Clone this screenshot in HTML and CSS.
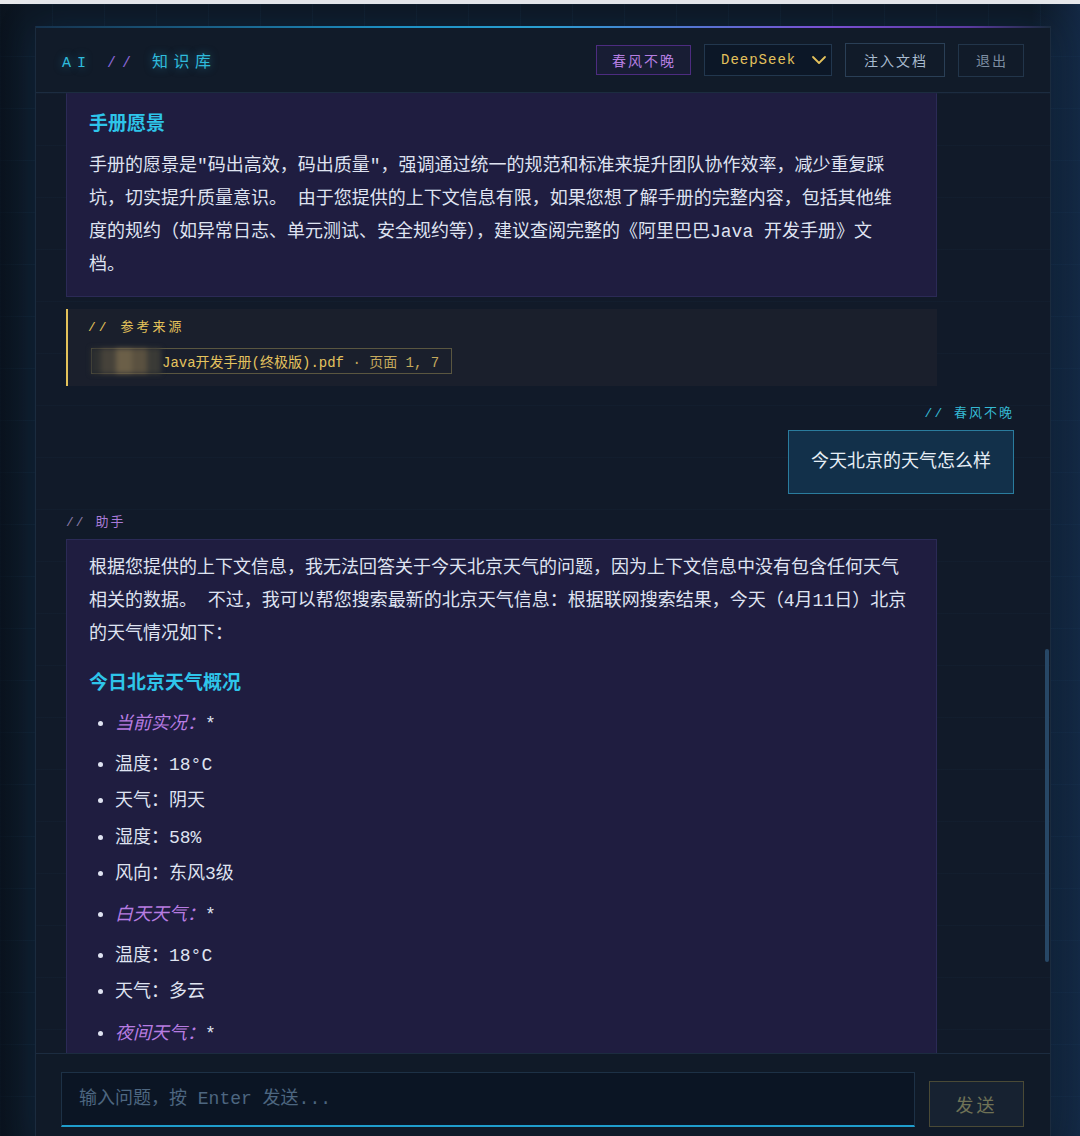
FILE: index.html
```html
<!DOCTYPE html>
<html lang="zh-CN">
<head>
<meta charset="utf-8">
<title>AI // 知识库</title>
<link rel="stylesheet" href="styles.css">
</head>
<body>
<div class="chrome"></div>
<div class="stage">
  <section class="panel">
    <header class="topbar">
      <h1 class="brand"><span class="brand-ai">AI</span> <span class="brand-sep">//</span> <span class="brand-name">知识库</span></h1>
      <nav class="actions">
        <span class="user-tag">春风不晚</span>
        <div class="model-select">
          <span>DeepSeek</span>
          <svg class="chevron" width="16" height="10" viewBox="0 0 16 10"><polyline points="2,2 8,8 14,2" fill="none" stroke="#e3c15c" stroke-width="1.8" stroke-linecap="round" stroke-linejoin="round"/></svg>
        </div>
        <button class="btn">注入文档</button>
        <button class="btn btn-dim">退出</button>
      </nav>
    </header>

    <main class="messages">
      <div class="thread">
        <article class="msg msg-ai">
          <div class="bubble bubble-first">
            <h3 class="first">手册愿景</h3>
            <p>手册的愿景是"码出高效，码出质量"，强调通过统一的规范和标准来提升团队协作效率，减少重复踩坑，切实提升质量意识。 由于您提供的上下文信息有限，如果您想了解手册的完整内容，包括其他维度的规约（如异常日志、单元测试、安全规约等），建议查阅完整的《阿里巴巴Java 开发手册》文档。</p>
          </div>
          <aside class="sources">
            <div class="sources-title">// 参考来源</div>
            <div class="chip"><span class="redact"></span><span class="chip-name">Java开发手册(终极版).pdf</span><span class="chip-page"> · 页面 1, 7</span></div>
          </aside>
        </article>

        <article class="msg msg-user">
          <div class="msg-label label-user">// 春风不晚</div>
          <div class="bubble-user">今天北京的天气怎么样</div>
        </article>

        <article class="msg msg-ai">
          <div class="msg-label label-ai"><span class="slash">//</span> 助手</div>
          <div class="bubble">
            <p>根据您提供的上下文信息，我无法回答关于今天北京天气的问题，因为上下文信息中没有包含任何天气相关的数据。 不过，我可以帮您搜索最新的北京天气信息：根据联网搜索结果，今天（4月11日）北京的天气情况如下：</p>
            <h3>今日北京天气概况</h3>
            <ul>
              <li class="group"><em>当前实况：</em>*</li>
              <li>温度：18°C</li>
              <li>天气：阴天</li>
              <li>湿度：58%</li>
              <li>风向：东风3级</li>
              <li class="group"><em>白天天气：</em>*</li>
              <li>温度：18°C</li>
              <li>天气：多云</li>
              <li class="group"><em>夜间天气：</em>*</li>
            </ul>
          </div>
        </article>
      </div>
      <div class="scroll-thumb"></div>
    </main>

    <footer class="composer">
      <input class="ask" type="text" placeholder="输入问题，按 Enter 发送...">
      <button class="send">发送</button>
    </footer>
  </section>
</div>
</body>
</html>
```

FILE: styles.css
```css
html, body {
  margin: 0;
  padding: 0;
}

body {
  height: 1136px;
  overflow: hidden;
  background: #0d1622;
  font-family: "Liberation Mono", "Noto Sans CJK SC", monospace;
  color: #dde2f0;
}

.chrome {
  height: 4px;
  background: #e7e8eb;
}

.stage {
  height: 1132px;
  box-sizing: border-box;
  padding: 22px 29px 0 35px;
  background-color: #0d1723;
  background-image:
    linear-gradient(90deg, rgba(8, 16, 26, 0.6) 0, transparent 2.5%, transparent 95.5%, rgba(28, 62, 108, 0.45) 100%),
    linear-gradient(rgba(70, 130, 190, 0.05) 1px, transparent 1px),
    linear-gradient(90deg, rgba(70, 130, 190, 0.05) 1px, transparent 1px);
  background-size: 100% 100%, 52px 52px, 52px 52px;
}

.panel {
  height: 1120px;
  display: flex;
  flex-direction: column;
  border: 1px solid #1b2b3e;
  border-top: none;
  background: #101a28;
  box-shadow: 0 0 36px rgba(25, 85, 150, 0.22);
}

.panel::before {
  content: "";
  display: block;
  height: 2px;
  flex: none;
  background: linear-gradient(90deg, #16324d 0%, #1d8fc2 35%, #2a9fd0 50%, #7a4fd2 78%, #5a3aa0 92%, #1b2b3e 100%);
}

/* ---------- header ---------- */
.topbar {
  flex: none;
  height: 65px;
  box-sizing: border-box;
  border-bottom: 1px solid #1c2c40;
  padding: 0 26px;
  display: flex;
  align-items: center;
  justify-content: space-between;
  background: #111b29;
}

.brand {
  margin: 0;
  font-size: 15px;
  font-weight: normal;
  letter-spacing: 6px;
  white-space: pre;
}

.brand-ai,
.brand-name {
  color: #2fbbdc;
  text-shadow: 0 0 8px rgba(40, 180, 220, 0.5);
}

.brand-name {
  font-size: 16px;
  letter-spacing: 5.5px;
}

.brand-sep {
  color: #8a66d4;
}

.actions {
  display: flex;
  align-items: center;
  gap: 13px;
}

.user-tag {
  height: 30px;
  box-sizing: border-box;
  display: inline-flex;
  align-items: center;
  padding: 0 14px 0 15px;
  border: 1px solid #4d2c80;
  background: rgba(110, 60, 190, 0.08);
  color: #b57ee0;
  font-size: 14px;
  letter-spacing: 2px;
}

.model-select {
  width: 128px;
  height: 32px;
  box-sizing: border-box;
  display: flex;
  align-items: center;
  justify-content: space-between;
  padding: 0 4px 0 16px;
  border: 1px solid #22374e;
  background: #0c1727;
  color: #e3c15c;
  font-size: 14px;
  letter-spacing: 1px;
}

.chevron {
  display: block;
}

.btn {
  height: 34px;
  box-sizing: border-box;
  padding: 0 16px 0 18px;
  border: 1px solid #2a3f56;
  background: transparent;
  color: #a9bccf;
  font-family: inherit;
  font-size: 14px;
  letter-spacing: 2px;
}

.btn-dim {
  height: 33px;
  padding: 0 15px 0 17px;
  border-color: #22354a;
  color: #7d8ea3;
}

/* ---------- messages ---------- */
.messages {
  flex: 1 1 auto;
  min-height: 0;
  overflow: hidden;
  position: relative;
  padding: 0 36px 0 30px;
  background-color: #111a29;
  background-image: linear-gradient(rgba(60, 110, 160, 0.045) 1px, transparent 1px);
  background-size: 100% 52px;
}

.thread {
  display: flex;
  flex-direction: column;
}

.msg-ai {
  width: 871px;
}

.bubble {
  background: #1f1d40;
  border: 1px solid #2b2a56;
  padding: 12px 29px 17px 22px;
  font-size: 18px;
  color: #dfe3f1;
}

.bubble-first {
  border-top-color: transparent;
  padding-top: 13px;
  padding-right: 35px;
  padding-bottom: 14px;
}

.bubble p {
  margin: 0;
  line-height: 33px;
}

.bubble h3 {
  margin: 20px 0 4px;
  font-size: 19px;
  line-height: 26px;
  font-weight: bold;
  color: #2ec5ea;
}

.bubble h3.first {
  margin: 5px 0 12px;
}

.bubble ul {
  margin: 0;
  padding: 0 0 0 26px;
}

.bubble li {
  line-height: 30.2px;
  padding: 3px 0;
}

.bubble li.group {
  padding: 8px 0;
}

.bubble em {
  color: #b77ce2;
  font-style: italic;
}

.sources {
  margin-top: 12px;
  border-left: 2px solid #e3c25a;
  background: #1a1f2c;
  padding: 10px 20px 12px 20px;
  display: flex;
  flex-direction: column;
  align-items: flex-start;
}

.sources-title {
  font-size: 13px;
  line-height: 18px;
  letter-spacing: 3px;
  color: #e3c25a;
}

.chip {
  margin: 11px 0 0 3px;
  height: 26px;
  box-sizing: border-box;
  display: flex;
  align-items: center;
  border: 1px solid #5a5640;
  padding: 0 12px 0 0;
  font-size: 14px;
  color: #e4c35e;
  white-space: pre;
}

.redact {
  width: 70px;
  height: 26px;
  margin: 0 1px 0 -1px;
  background: linear-gradient(90deg, #2e3030 0 14%, #46423a 14% 36%, #6b5f48 36% 58%, #5a5140 58% 80%, #3a3a36 80%);
  filter: blur(2.5px);
}

.chip-page {
  color: #c4a95c;
}

.msg-user {
  margin-top: 19px;
  display: flex;
  flex-direction: column;
  align-items: flex-end;
}

.msg-label {
  font-size: 13px;
  line-height: 18px;
  letter-spacing: 2px;
}

.label-user {
  color: #35b9d3;
}

.label-ai {
  color: #a97bd8;
}

.label-ai .slash {
  color: #8a7aa8;
}

.bubble-user {
  margin-top: 7px;
  padding: 17px 22px;
  line-height: 28px;
  font-size: 18px;
  background: #12304a;
  border: 1px solid #2a7c9e;
  color: #e6eef6;
}

.msg-user + .msg-ai {
  margin-top: 20px;
}

.msg-user + .msg-ai .bubble {
  margin-top: 7px;
}

.scroll-thumb {
  position: absolute;
  right: 1px;
  top: 556px;
  width: 4px;
  height: 313px;
  border-radius: 2px;
  background: #274766;
}

/* ---------- composer ---------- */
.composer {
  flex: none;
  height: 93px;
  box-sizing: border-box;
  border-top: 1px solid #1c2c40;
  padding: 18px 26px 0 25px;
  display: flex;
  align-items: flex-start;
  gap: 14px;
  background: #101a28;
}

.ask {
  flex: 1 1 auto;
  min-width: 0;
  height: 55px;
  box-sizing: border-box;
  margin: 0;
  padding: 0 17px;
  border: 1px solid #1d3146;
  border-bottom: 2px solid #1f9dcc;
  background: #0b1524;
  color: #dde2f0;
  font-family: inherit;
  font-size: 18px;
  outline: none;
}

.ask::placeholder {
  color: #4d6680;
}

.send {
  flex: none;
  width: 95px;
  height: 46px;
  margin-top: 9px;
  box-sizing: border-box;
  border: 1px solid #4a4a36;
  background: #172231;
  color: #6f7256;
  font-family: inherit;
  font-size: 18px;
  letter-spacing: 3px;
}
```
